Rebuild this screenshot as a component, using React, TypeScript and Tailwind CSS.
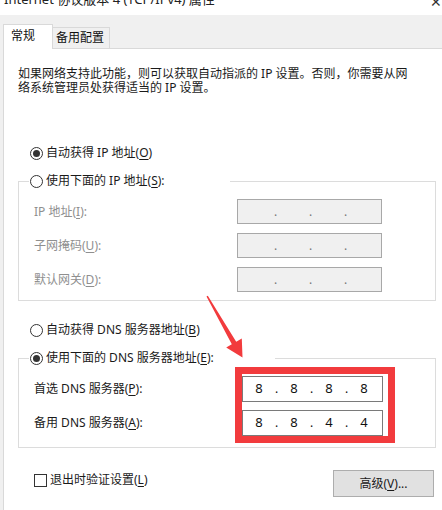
import type { ReactNode } from 'react';

const FONT = { fontFamily: '"Noto Sans", "Noto Sans CJK SC", sans-serif' };

function Radio({ checked }: { checked?: boolean }) {
  return (
    <span className="w-[13px] h-[13px] rounded-full border border-[#333] bg-white flex items-center justify-center shrink-0">
      {checked && <span className="w-[7px] h-[7px] rounded-full bg-[#333]" />}
    </span>
  );
}

function RadioRow({ checked, children }: { checked?: boolean; children: ReactNode }) {
  return (
    <div className="h-[18px] flex items-center gap-[3px] text-[12px] text-[#1a1a1a]">
      <Radio checked={checked} />
      <span>{children}</span>
    </div>
  );
}

function IpBox({ parts, disabled }: { parts: string[]; disabled?: boolean }) {
  return (
    <div
      className={
        disabled
          ? 'w-[145px] h-[25px] bg-[#f0f0f0] border border-[#a8a8a8] flex items-center pl-[8px] text-[#777]'
          : 'w-[141px] h-[26px] bg-white border border-[#7a7a7a] flex items-center pl-[4px] text-[#111]'
      }
    >
      {parts.map((p, i) => (
        <div key={i} className="flex items-center">
          <span className="w-[24px] text-center text-[13px]">{p}</span>
          {i < 3 && <span className="w-[11px] text-center text-[12px]">.</span>}
        </div>
      ))}
    </div>
  );
}

const u = (s: string) => <span className="underline underline-offset-2">{s}</span>;

export default function App() {
  return (
    <div className="relative w-[442px] h-[510px] bg-[#f0f0f0] overflow-hidden flex flex-col" style={FONT}>
      {/* title bar, cut off at the top */}
      <div className="h-[15px] bg-white overflow-hidden relative shrink-0">
        <div className="-mt-[9px] pl-[4px] text-[13px] leading-[16px] text-[#222] whitespace-nowrap">
          Internet 协议版本 4 (TCP/IPv4) 属性
        </div>
        <span className="absolute right-[0px] -top-[9px] text-[14px] text-[#333]">✕</span>
      </div>

      {/* tabs */}
      <div className="h-[33px] flex items-end pl-[3px] shrink-0">
        <div className="relative z-10 -mb-px w-[50px] h-[25px] bg-white border border-b-0 border-[#d9d9d9] pl-[7px] pt-[2px] text-[12px] text-[#111]">
          常规
        </div>
        <div className="w-[57px] h-[21px] bg-[#f0f0f0] border border-l-0 border-b-0 border-[#d9d9d9] pl-[3px] pt-[1px] text-[12px] text-[#111]">
          备用配置
        </div>
      </div>

      {/* panel */}
      <div className="ml-[3px] flex-1 bg-white border-l border-t border-[#d9d9d9] pl-[14px]">
        <p className="mt-[18px] w-[395px] text-[12px] leading-[14px] text-[#1a1a1a]">
          如果网络支持此功能，则可以获取自动指派的 IP 设置。否则，你需要从网络系统管理员处获得适当的 IP 设置。
        </p>

        <div className="mt-[49px] pl-[12px]">
          <RadioRow checked>自动获得 IP 地址({u('O')})</RadioRow>
        </div>

        <fieldset className="mt-[10px] w-[418px] border border-[#dcdcdc] pl-[15px] pb-[8px]">
          <legend className="w-[201px] -ml-[5px] pl-[1px]">
            <RadioRow>使用下面的 IP 地址({u('S')}):</RadioRow>
          </legend>
          <div className="pt-[9px] flex flex-col gap-[9px] text-[12px] text-[#8f8f8f]">
            <div className="flex items-center">
              <span className="w-[203px]">IP 地址({u('I')}):</span>
              <IpBox parts={['', '', '', '']} disabled />
            </div>
            <div className="flex items-center">
              <span className="w-[203px]">子网掩码({u('U')}):</span>
              <IpBox parts={['', '', '', '']} disabled />
            </div>
            <div className="flex items-center">
              <span className="w-[203px]">默认网关({u('D')}):</span>
              <IpBox parts={['', '', '', '']} disabled />
            </div>
          </div>
        </fieldset>

        <div className="mt-[20px] pl-[12px]">
          <RadioRow>自动获得 DNS 服务器地址({u('B')})</RadioRow>
        </div>

        <fieldset className="mt-[10px] w-[418px] border border-[#dcdcdc] pl-[15px] pb-[11px]">
          <legend className="w-[246px] -ml-[5px] pl-[1px]">
            <RadioRow checked>使用下面的 DNS 服务器地址({u('E')}):</RadioRow>
          </legend>
          <div className="pt-[9px] flex flex-col gap-[8px] text-[12px] text-[#1a1a1a]">
            <div className="flex items-center">
              <span className="w-[208px]">首选 DNS 服务器({u('P')}):</span>
              <IpBox parts={['8', '8', '8', '8']} />
            </div>
            <div className="flex items-center">
              <span className="w-[208px]">备用 DNS 服务器({u('A')}):</span>
              <IpBox parts={['8', '8', '4', '4']} />
            </div>
          </div>
        </fieldset>

        <div className="mt-[22px] flex items-start justify-between w-[416px] pl-[16px]">
          <div className="pt-[1px] flex items-center gap-[3px] text-[12px] text-[#1a1a1a]">
            <span className="w-[13px] h-[13px] border border-[#333] bg-white" />
            <span>退出时验证设置({u('L')})</span>
          </div>
          <button className="w-[101px] h-[27px] bg-[#e1e1e1] border border-[#adadad] text-[12px] text-[#1a1a1a]">
            高级({u('V')})...
          </button>
        </div>
      </div>

      {/* red annotation: box around DNS fields and arrow */}
      <div className="absolute left-[235px] top-[367px] w-[160px] h-[76px] border-[7px] border-[#f23b3d] pointer-events-none" />
      <svg className="absolute left-0 top-0 pointer-events-none" width="442" height="510">
        <polygon
          points="206.5,296.5 207.8,295.8 236.2,341.8 241.8,338.5 242.5,357.5 226.2,347.5 231.8,344.2"
          fill="#f23b3d"
        />
      </svg>
    </div>
  );
}
